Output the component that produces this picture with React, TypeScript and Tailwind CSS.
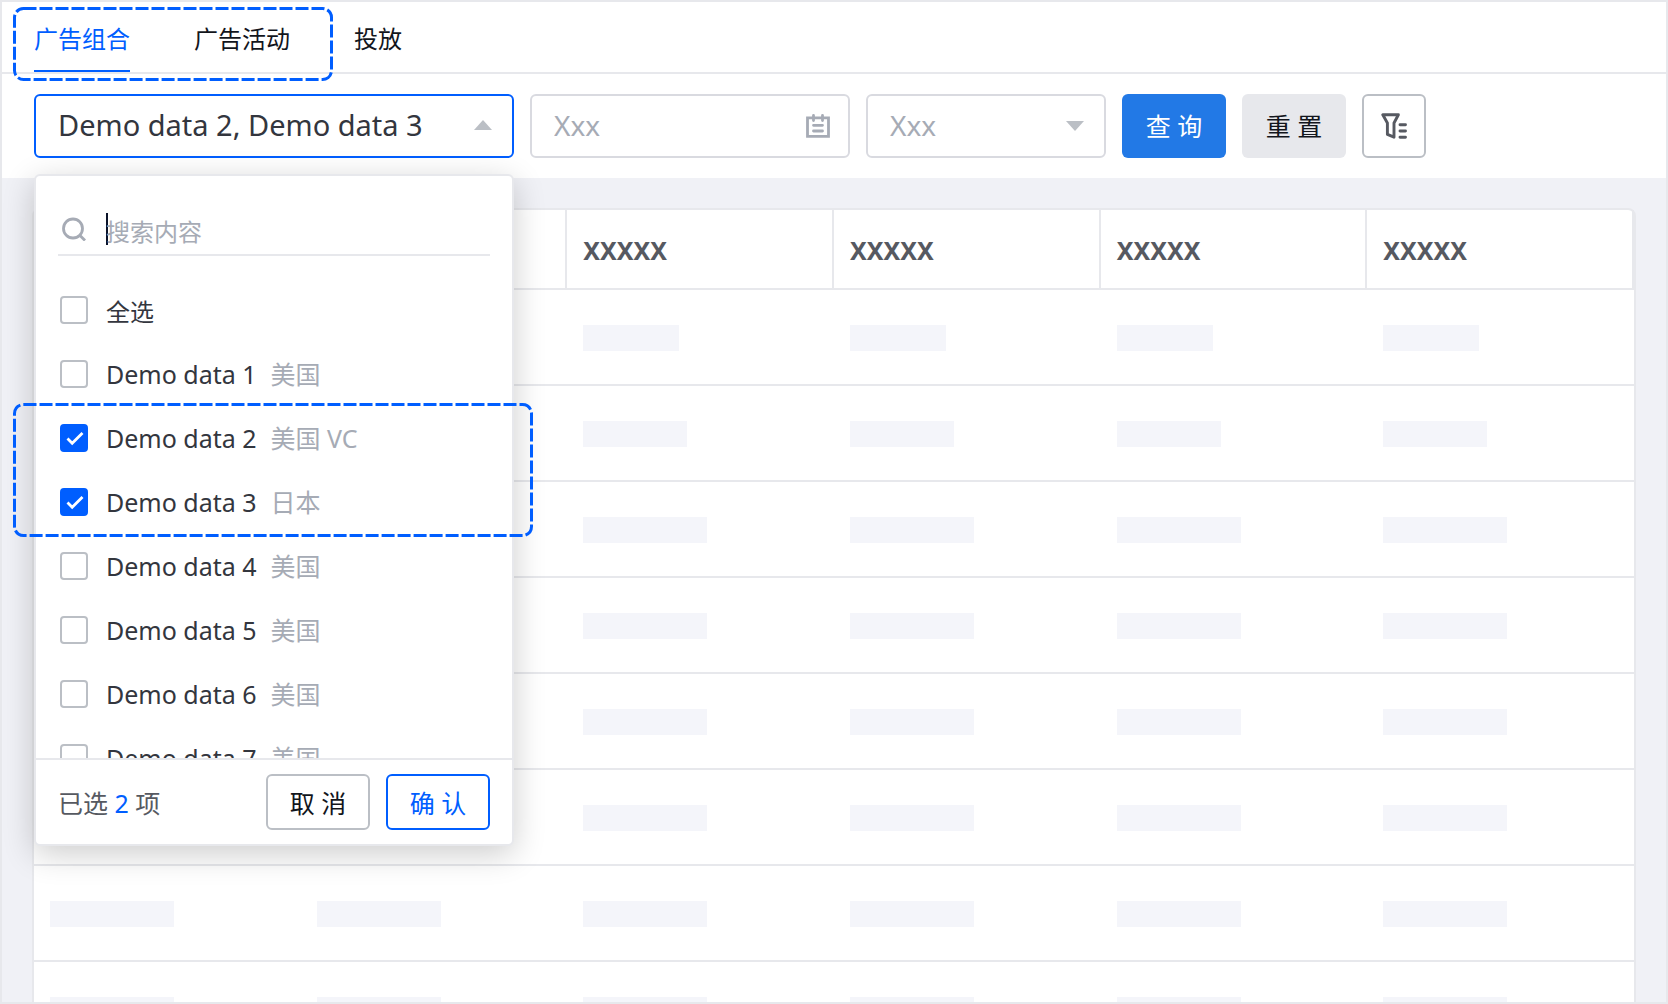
import { useState } from 'react'
import type { ReactNode } from 'react'
import clsx from 'clsx'

const tabs = ['广告组合', '广告活动', '投放']

const options = [
  { id: 1, name: 'Demo data 1', region: '美国' },
  { id: 2, name: 'Demo data 2', region: '美国 VC' },
  { id: 3, name: 'Demo data 3', region: '日本' },
  { id: 4, name: 'Demo data 4', region: '美国' },
  { id: 5, name: 'Demo data 5', region: '美国' },
  { id: 6, name: 'Demo data 6', region: '美国' },
  { id: 7, name: 'Demo data 7', region: '美国' },
]

const columns = [1, 2, 3, 4, 5, 6]

const rowWidths = ['w-24', 'w-[104px]', 'w-31', 'w-31', 'w-31', 'w-31', 'w-31', 'w-31']

function DashedFrame({ className }: { className: string }) {
  return (
    <svg className={clsx('pointer-events-none absolute', className)} aria-hidden="true">
      <rect
        x="1.5"
        y="1.5"
        rx="9"
        className="h-[calc(100%-3px)] w-[calc(100%-3px)]"
        fill="none"
        stroke="#005eff"
        strokeWidth="3"
        strokeDasharray="13 3"
      />
    </svg>
  )
}

function SearchIcon() {
  return (
    <svg className="size-6" viewBox="0 0 24 24" fill="none" stroke="#a6abb5" strokeWidth="2.8" aria-hidden="true">
      <circle cx="11" cy="11.5" r="9.5" />
      <path d="M17.5 18 23 23.5" />
    </svg>
  )
}

function CalendarIcon() {
  return (
    <svg className="size-6" viewBox="0 0 24 24" fill="none" stroke="#a6abb5" strokeWidth="2.8" aria-hidden="true">
      <path d="M1.5 3.8H22.5V22.3H1.5Z" />
      <path d="M7.5 1.5V6.5M16.5 1.5V6.5M7.5 11.3H16.5M7.5 17H16.5" strokeLinecap="round" />
    </svg>
  )
}

function FilterIcon() {
  return (
    <svg className="h-[26px] w-[26px]" viewBox="0 0 26 26" fill="none" stroke="#565961" strokeWidth="2.9" aria-hidden="true">
      <path d="M1.8 1.8H17.4L13 10V24.2L6.4 21.4V10Z" strokeLinejoin="round" />
      <path d="M19 11.8H24.5M19 18H24.5M19 24.2H24.5" strokeLinecap="round" />
    </svg>
  )
}

function Caret({ up = false }: { up?: boolean }) {
  return (
    <svg className="h-[10px] w-[18px]" viewBox="0 0 18 10" fill="#bbbfc5" aria-hidden="true">
      <path d={up ? 'M9 0 18 10H0Z' : 'M0 0H18L9 10Z'} />
    </svg>
  )
}

function Checkbox({ checked, onChange }: { checked: boolean; onChange: () => void }) {
  return (
    <span className="relative flex size-7 shrink-0">
      <input
        type="checkbox"
        checked={checked}
        onChange={onChange}
        className="size-7 appearance-none rounded-sm border-2 border-[#bbbfc5] bg-white checked:border-[#005eff] checked:bg-[#005eff]"
      />
      {checked && (
        <svg className="pointer-events-none absolute inset-0" viewBox="0 0 28 28" fill="none" stroke="#fff" strokeWidth="2.8" aria-hidden="true">
          <path d="M7.5 14.5 12.2 19.2 22.5 9" />
        </svg>
      )}
    </span>
  )
}

function Option({ checked, onChange, children }: { checked: boolean; onChange: () => void; children: ReactNode }) {
  return (
    <label className="flex h-16 items-center gap-[18px]">
      <Checkbox checked={checked} onChange={onChange} />
      <span className="flex items-baseline gap-[14px] text-[25px] leading-8">{children}</span>
    </label>
  )
}

function AccountDropdown({ selected, onToggle, onToggleAll }: { selected: number[]; onToggle: (id: number) => void; onToggleAll: () => void }) {
  return (
    <div className="absolute top-20 right-0 left-0 z-10 rounded-md border-2 border-[#e7e8ec] bg-white shadow-[0_8px_32px_rgba(0,0,0,0.2)]">
      <div className="mx-[22px] mt-8 flex h-12 items-center gap-5 border-b-2 border-[#e7e8ec] pb-1 pl-1">
        <SearchIcon />
        <div className="flex flex-1 items-center">
          <span className="-mr-[2px] h-8 w-[2px] bg-[#0b1329]" />
          <input
            aria-label="搜索内容"
            placeholder="搜索内容"
            className="h-9 w-full min-w-0 pt-1 text-2xl outline-none placeholder:text-[#a6abb5]"
          />
        </div>
      </div>
      <div className="h-[502px] overflow-hidden px-6 pt-[22px]">
        <Option checked={selected.length === options.length} onChange={onToggleAll}>
          <span className="pt-1 text-2xl leading-8">全选</span>
        </Option>
        {options.map((option) => (
          <Option key={option.id} checked={selected.includes(option.id)} onChange={() => onToggle(option.id)}>
            <span>{option.name}</span>
            <span className="text-[#a6abb5]">{option.region}</span>
          </Option>
        ))}
      </div>
      <div className="flex h-[86px] items-center gap-4 border-t-2 border-[#e7e8ec] px-[22px]">
        <p className="flex-1 pt-[2px] text-[25px] leading-8 text-[#565961]">
          已选 <span className="text-[#005eff]">{selected.length}</span> 项
        </p>
        <button type="button" className="h-14 w-[104px] rounded-md border-2 border-[#bbbfc5] pt-[2px] text-[25px] leading-8 text-[#12151c]">
          取 消
        </button>
        <button type="button" className="h-14 w-[104px] rounded-md border-2 border-[#005eff] pt-[2px] text-[25px] leading-8 text-[#005eff]">
          确 认
        </button>
      </div>
      <DashedFrame className="top-[227px] -left-[23px] h-[134px] w-[520px]" />
    </div>
  )
}

function TabBar() {
  const [active, setActive] = useState(tabs[0])

  return (
    <nav className="relative flex h-[72px] shrink-0 gap-16 border-b-2 border-[#e7e8ec] px-8">
      {tabs.map((tab) => (
        <button
          key={tab}
          type="button"
          onClick={() => setActive(tab)}
          className={clsx(
            'border-b-2 pt-[6px] text-2xl',
            active === tab ? 'border-[#005eff] text-[#005eff]' : 'border-transparent text-[#12151c]',
          )}
        >
          {tab}
        </button>
      ))}
      <DashedFrame className="top-[5px] left-[11px] h-[74px] w-80" />
    </nav>
  )
}

function DataTable() {
  return (
    <div className="mx-[30px] mt-[30px] rounded-t-lg border-2 border-[#e7e8ec] bg-white">
      <table className="w-full table-fixed border-separate border-spacing-0">
        <thead>
          <tr>
            {columns.map((column) => (
              <th
                key={column}
                className="h-20 border-r-2 border-b-2 border-[#e7e8ec] px-4 pt-1 text-left text-[25px] font-bold text-[#565961]"
              >
                XXXXX
              </th>
            ))}
          </tr>
        </thead>
        <tbody>
          {rowWidths.concat('w-31').map((width, row) => (
            <tr key={row}>
              {columns.map((column) => (
                <td key={column} className="h-24 border-b-2 border-[#e7e8ec] px-4 pt-[2px]">
                  <div className={clsx('h-[26px] bg-[#f4f5fa]', width)} />
                </td>
              ))}
            </tr>
          ))}
        </tbody>
      </table>
    </div>
  )
}

export default function App() {
  const [selected, setSelected] = useState([2, 3])

  const toggle = (id: number) =>
    setSelected((prev) => (prev.includes(id) ? prev.filter((x) => x !== id) : [...prev, id].sort()))

  const toggleAll = () =>
    setSelected((prev) => (prev.length === options.length ? [] : options.map((o) => o.id)))

  const label = options
    .filter((o) => selected.includes(o.id))
    .map((o) => o.name)
    .join(', ')

  return (
    <div className="flex h-screen flex-col overflow-hidden border-2 border-[#e7e8ec] bg-[#f0f1f6] font-['Noto_Sans','Noto_Sans_CJK_SC',sans-serif] text-[#33363e]">
      <div className="shrink-0 bg-white">
        <TabBar />
        <div className="flex h-[104px] items-start gap-4 px-8 pt-5">
          <div className="relative w-[480px]">
            <button
              type="button"
              aria-expanded="true"
              className="flex h-16 w-full items-center justify-between rounded-md border-2 border-[#005eff] pr-5 pb-[2px] pl-[22px] text-[29px]"
            >
              <span className="truncate">{label}</span>
              <Caret up />
            </button>
            <AccountDropdown selected={selected} onToggle={toggle} onToggleAll={toggleAll} />
          </div>
          <label className="flex h-16 w-80 items-center rounded-md border-2 border-[#d9dae0] px-[18px]">
            <input aria-label="日期" placeholder="Xxx" className="min-w-0 flex-1 pb-[2px] pl-1 text-[28px] outline-none placeholder:text-[#a6abb5]" />
            <CalendarIcon />
          </label>
          <button
            type="button"
            className="flex h-16 w-60 items-center justify-between rounded-md border-2 border-[#d9dae0] pr-5 pl-[22px] text-[28px] text-[#a6abb5]"
          >
            <span className="pb-[2px]">Xxx</span>
            <Caret />
          </button>
          <button type="button" className="h-16 w-[104px] rounded-md bg-[#2279e6] pt-[2px] text-[25px] text-white">
            查 询
          </button>
          <button type="button" className="h-16 w-[104px] rounded-md bg-[#e7e8ec] pt-[2px] text-[25px] text-[#12151c]">
            重 置
          </button>
          <button
            type="button"
            aria-label="筛选"
            className="flex size-16 items-center justify-center rounded-md border-2 border-[#bbbfc5] bg-white"
          >
            <FilterIcon />
          </button>
        </div>
      </div>
      <DataTable />
    </div>
  )
}
